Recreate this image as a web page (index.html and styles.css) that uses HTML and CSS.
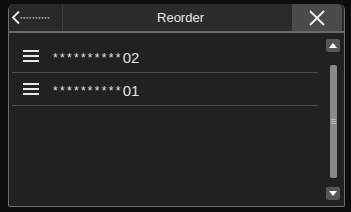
FILE: index.html
```html
<!DOCTYPE html>
<html lang="en">
<head>
  <meta charset="UTF-8" />
  <title>Reorder</title>
  <link rel="stylesheet" href="styles.css">
</head>
<body>

<div class="screen">
  <div class="header">
    <div class="back-btn">
      <svg class="back-icon" width="10" height="15" viewBox="0 0 10 15">
        <polyline points="8,1.5 2,7.5 8,13.5" fill="none" stroke="#ececec" stroke-width="1.8" />
      </svg>
      <span class="back-text">**********</span>
    </div>
    <div class="title">Reorder</div>
    <div class="close-btn">
      <svg width="16" height="16" viewBox="0 0 16 16">
        <path d="M1 1 L15 15 M15 1 L1 15" stroke="#f0f0f0" stroke-width="1.8" />
      </svg>
    </div>
  </div>

  <div class="body">
    <div class="list" id="list">
      <!-- rows inserted below -->
    </div>

    <div class="scrollbar">
      <div class="scroll-btn"><span class="tri-up"></span></div>
      <div class="track">
        <div class="grip"></div>
      </div>
      <div class="scroll-btn"><span class="tri-down"></span></div>
    </div>
  </div>
</div>

<script>
  const items = ["02", "01"];
  const list = document.getElementById('list');
  items.forEach(num => {
    const row = document.createElement('div');
    row.className = "row";
    row.innerHTML = `
      <span class="handle"><i></i><i></i><i></i></span>
      <span class="row-text"><span class="stars">**********</span>${num}</span>
    `;
    list.appendChild(row);
  });
</script>

</body>
</html>
```

FILE: styles.css
```css
body {
  margin: 0;
  background-color: #0d0d0d;
  font-family: 'Liberation Sans', Arial, sans-serif;
  color: #e0e0e0;
}

.screen {
  width: 335px;
  height: 202px;
  margin: 4px 0 0 8px;
  border: 1px solid #6e6e6e;
  border-top: none;
  border-radius: 6px 6px 2px 2px;
  background-color: #222122;
  display: flex;
  flex-direction: column;
  overflow: hidden;
}

.header {
  height: 27px;
  display: flex;
  border-bottom: 2px solid #6a6a6a;
  background-color: #2c2b2c;
}

.back-btn {
  width: 51px;
  display: flex;
  align-items: center;
  padding-left: 2px;
  background-color: #2a292a;
  border-right: 1px solid #3c3c3c;
}

.back-icon {
  flex: none;
}

.back-text {
  font-size: 6px;
  letter-spacing: 0.7px;
  color: #cfcfcf;
  margin-left: -1px;
  margin-top: 3px;
}

.title {
  flex: 1;
  text-align: center;
  line-height: 27px;
  font-size: 13px;
  color: #e8e8e8;
  padding-left: 6px;
}

.close-btn {
  width: 50px;
  display: flex;
  align-items: center;
  justify-content: center;
  background-color: #4b4b4b;
  border-radius: 0 5px 0 0;
  margin-right: 2px;
}

.body {
  flex: 1;
  display: flex;
}

.list {
  flex: 1;
  padding: 7px 0 0 3px;
}

.row {
  height: 32px;
  display: flex;
  align-items: center;
  border-bottom: 1px solid #4a4a4a;
}

.handle {
  width: 16px;
  display: flex;
  flex-direction: column;
  gap: 3px;
  margin: 0 14px 0 11px;
}

.handle i {
  display: block;
  height: 2px;
  background-color: #e6e6e6;
}

.row-text {
  font-size: 15px;
  color: #e2e2e2;
  margin-top: 2px;
}

.stars {
  font-size: 12px;
  letter-spacing: 2.3px;
  position: relative;
  top: -1px;
}

.scrollbar {
  width: 22px;
  display: flex;
  flex-direction: column;
  align-items: center;
  padding: 6px 0 6px 4px;
}

.scroll-btn {
  width: 14px;
  height: 13px;
  background-color: #565656;
  border-radius: 2px;
  display: flex;
  align-items: center;
  justify-content: center;
}

.tri-up {
  border-left: 4px solid transparent;
  border-right: 4px solid transparent;
  border-bottom: 5px solid #fff;
}

.tri-down {
  border-left: 4px solid transparent;
  border-right: 4px solid transparent;
  border-top: 5px solid #fff;
}

.track {
  flex: 1;
  width: 7px;
  margin: 13px 0 9px;
  background-color: #8a8a8a;
  border-radius: 2px;
  display: flex;
  align-items: center;
  justify-content: center;
}

.grip {
  width: 5px;
  height: 7px;
  background: repeating-linear-gradient(#8a8a8a 0 1px, #b4b4b4 1px 2px);
}
```
